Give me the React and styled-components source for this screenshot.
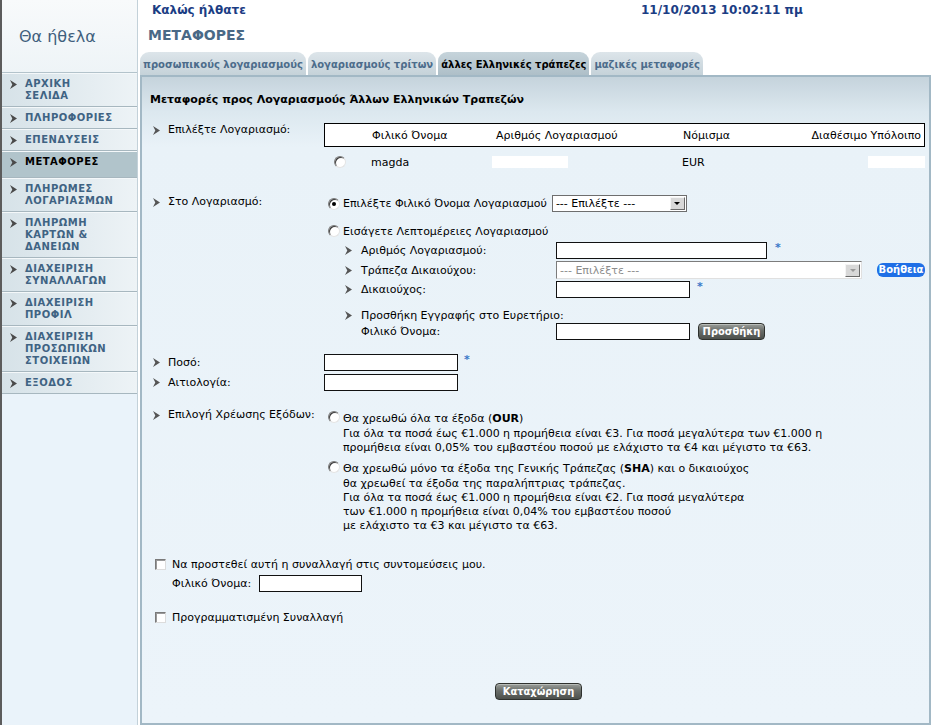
import React from "react";
import styled, { createGlobalStyle } from "styled-components";

const GlobalStyle = createGlobalStyle`
  html, body { margin: 0; padding: 0; }
  body {
    font-family: "DejaVu Sans", Verdana, sans-serif;
    font-size: 11px;
    color: #000;
    background: #fff;
  }
`;

const Page = styled.div`
  display: flex;
  width: 931px;
  height: 725px;
  overflow: hidden;
`;

/* ---------- sidebar ---------- */

const Sidebar = styled.aside`
  width: 135px;
  flex: none;
  border-left: 2px solid #5c5c5c;
  border-right: 1px solid #c3d1d9;
  background: #eaf3fa;
  display: flex;
  flex-direction: column;
`;

const Brand = styled.div`
  height: 72px;
  display: flex;
  align-items: center;
  padding-left: 17px;
  background: linear-gradient(#f8fafb, #eef4f7);
  font-size: 16px;
  color: #3f5f7d;
`;

const Menu = styled.nav`
  border-top: 1px solid #b3c3cb;
`;

const MenuItem = styled.div`
  display: flex;
  align-items: flex-start;
  gap: 8px;
  padding: 5px 6px ${(p) => (p.$active ? "9px" : "4px")} 8px;
  border-bottom: 1px solid #a7b7bf;
  box-shadow: inset 0 1px 0 #f4f8fa;
  background: ${(p) =>
    p.$active ? "#b1c4cb" : "linear-gradient(90deg, #d6e2e8, #edf3f6)"};
  color: ${(p) => (p.$active ? "#000" : "#3f6383")};
  font-weight: bold;
  font-size: 10px;
  line-height: 12px;
  letter-spacing: 0.5px;

  svg {
    margin-top: 2px;
    flex: none;
  }
`;

/* ---------- main ---------- */

const Main = styled.main`
  flex: 1;
  min-width: 0;
  display: flex;
  flex-direction: column;
  padding-left: 2px;
`;

const TopBar = styled.div`
  display: grid;
  grid-template-columns: 501px 1fr;
  height: 20px;
  align-items: center;
  font-weight: bold;
  font-size: 12px;
  color: #1b3d84;
`;

const Welcome = styled.span`
  padding-left: 12px;
`;

const PageTitle = styled.h1`
  margin: 0;
  padding: 7px 0 8px 8px;
  font-size: 14px;
  line-height: 17px;
  color: #4a6986;
`;

const Tabs = styled.div`
  display: flex;
  align-items: flex-end;
  gap: 2px;
  height: 23px;
`;

const Tab = styled.div`
  height: 23px;
  box-sizing: border-box;
  padding: 6px 3px 0;
  border-radius: 9px 9px 0 0;
  background: ${(p) =>
    p.$active
      ? "linear-gradient(#c6d4db, #aebfc8)"
      : "linear-gradient(#dde5ea, #c5d2d9)"};
  color: ${(p) => (p.$active ? "#000" : "#4c6c8b")};
  font-weight: bold;
  font-size: 10px;
  line-height: 14px;
  white-space: nowrap;
`;

const Panel = styled.section`
  flex: 1;
  border: 2px solid #a2b8c5;
  background: linear-gradient(#c5d3dc 0, #dce8ef 35px, #e9f2f8 70px, #ecf4fa 100%);
  display: flex;
  flex-direction: column;
`;

const Heading = styled.h2`
  margin: 0;
  padding: 16px 0 0 8px;
  font-size: 11px;
  line-height: 14px;
`;

const FormRow = styled.div`
  display: grid;
  grid-template-columns: 171px 1fr;
  align-items: ${(p) => p.$align || "start"};
  padding-left: 11px;
  margin-top: ${(p) => p.$mt || 0}px;
`;

const Label = styled.div`
  display: flex;
  align-items: center;
  gap: 8px;
  line-height: 14px;
  white-space: nowrap;

  svg {
    flex: none;
  }
`;

const Arrow = () => (
  <svg width="7" height="9" viewBox="0 0 7 9">
    <polygon points="0,0 7,4.5 0,9 2.3,4.5" fill="#555" />
  </svg>
);

const ValueCol = styled.div`
  display: flex;
  flex-direction: column;
`;

/* account table */

const AccountGrid = styled.div`
  display: grid;
  grid-template-columns: 47px 124px 187px 1fr auto;
  align-items: center;
  width: 601px;
  box-sizing: border-box;
`;

const AccountHead = styled(AccountGrid)`
  height: 24px;
  border: 1px solid #000;
  background: #fff;
  padding-right: 3px;
`;

const AccountRow = styled(AccountGrid)`
  height: 18px;
  margin-top: 6px;
`;

const RadioCell = styled.div`
  padding-left: 10px;
  display: flex;
`;

const Blank = styled.div`
  width: ${(p) => p.$w}px;
  height: 12px;
  background: #fff;
  margin-left: ${(p) => p.$ml || 0}px;
`;

/* radio / checkbox */

const Radio = styled.span`
  position: relative;
  flex: none;
  width: 12px;
  height: 12px;
  box-sizing: border-box;
  border-radius: 50%;
  border: 1px solid;
  border-color: #7a7a7a #e4e4e4 #e4e4e4 #7a7a7a;
  background: #fff;
  box-shadow: inset 1px 1px 0 #3c3c3c;

  &::after {
    content: "";
    display: ${(p) => (p.$checked ? "block" : "none")};
    position: absolute;
    left: 3px;
    top: 3px;
    width: 4px;
    height: 4px;
    border-radius: 50%;
    background: #000;
  }
`;

const Checkbox = styled.span`
  flex: none;
  width: 11px;
  height: 11px;
  box-sizing: border-box;
  border: 1px solid;
  border-color: #7a7a7a #dcdcdc #dcdcdc #7a7a7a;
  background: #fff;
  box-shadow: inset 1px 1px 0 #9a9a9a;
`;

const RadioLine = styled.div`
  display: flex;
  align-items: center;
  gap: 3px;
  padding-left: 4px;
  min-height: ${(p) => p.$h || 16}px;
  margin-top: ${(p) => p.$mt || 0}px;
  white-space: nowrap;
`;

/* fields */

const TextInput = styled.input`
  width: ${(p) => p.$w}px;
  height: 17px;
  box-sizing: border-box;
  margin: 0;
  padding: 0 2px;
  border: 1px solid #111;
  background: #fff;
  font: inherit;
`;

const Select = styled.div`
  display: flex;
  align-items: center;
  width: ${(p) => p.$w}px;
  height: ${(p) => (p.$disabled ? 18 : 17)}px;
  box-sizing: border-box;
  border: 1px solid;
  border-color: ${(p) =>
    p.$disabled ? "#7c7c7c #e0e0e0 #e0e0e0 #7c7c7c" : "#6e6e6e"};
  background: #fff;
  color: ${(p) => (p.$disabled ? "#8c8c8c" : "#000")};
  padding-left: 3px;
  margin-left: ${(p) => p.$ml || 0}px;
`;

const SelectText = styled.span`
  flex: 1;
  white-space: nowrap;
`;

const SelectButton = styled.span`
  width: 15px;
  height: 13px;
  margin-right: 1px;
  box-sizing: border-box;
  border: 1px solid;
  border-color: #f4f4f4 #6a6a6a #6a6a6a #f4f4f4;
  background: #d8d8d8;
  display: flex;
  align-items: center;
  justify-content: center;

  &::before {
    content: "";
    border-left: 3px solid transparent;
    border-right: 3px solid transparent;
    border-top: 3px solid ${(p) => (p.$disabled ? "#9a9a9a" : "#000")};
  }
`;

const Star = styled.span`
  color: #3a78c8;
  font-weight: bold;
  font-size: 11px;
  margin-left: ${(p) => p.$ml || 8}px;
  align-self: flex-start;
  line-height: 12px;
`;

const SubFields = styled.div`
  display: flex;
  flex-direction: column;
  gap: 2px;
  margin-top: 3px;
`;

const SubRow = styled.div`
  display: grid;
  grid-template-columns: 211px 1fr;
  align-items: center;
  padding-left: 21px;
  margin-top: ${(p) => p.$mt || 0}px;
  min-height: 14px;
`;

const SubLabel = styled.div`
  display: flex;
  align-items: center;
  gap: 9px;
  padding-left: ${(p) => (p.$plain ? 16 : 0)}px;
  white-space: nowrap;
  grid-column: ${(p) => (p.$wide ? "1 / -1" : "auto")};

  svg {
    flex: none;
  }
`;

const Field = styled.div`
  display: flex;
  align-items: center;
`;

const DarkButton = styled.button`
  width: ${(p) => p.$w}px;
  height: 17px;
  padding: 0;
  margin-left: ${(p) => p.$ml || 0}px;
  border: 1px solid #2e312e;
  border-radius: 4px;
  background: linear-gradient(#9a9e9a, #6a6e6a 45%, #4c504c);
  box-shadow: inset 0 1px 0 #b8bcb8;
  color: #fff;
  font-family: "DejaVu Sans Condensed", "DejaVu Sans", sans-serif;
  font-weight: bold;
  font-size: 11px;
  line-height: 15px;
`;

const HelpButton = styled.button`
  width: 48px;
  height: 14px;
  padding: 0;
  margin-left: 15px;
  border: none;
  border-radius: 6px;
  background: #1f6fe6;
  color: #fff;
  font-family: "DejaVu Sans", sans-serif;
  font-weight: bold;
  font-size: 10px;
  line-height: 14px;
`;

/* charges */

const Options = styled.div`
  display: flex;
  flex-direction: column;
  gap: 5px;
  margin-top: 2px;
`;

const Option = styled.div`
  display: flex;
  gap: 3px;
  padding-left: 4px;
  line-height: 14px;
  white-space: nowrap;

  ${Radio} {
    margin-top: 1px;
  }
`;

const OptionText = styled.div`
  padding-top: 1px;

  div:first-child {
    line-height: 16px;
  }
`;

/* bottom */

const CheckLine = styled.label`
  display: flex;
  align-items: center;
  gap: 6px;
  padding-left: 13px;
  height: 14px;
  margin-top: ${(p) => p.$mt || 0}px;
  white-space: nowrap;
`;

const NameLine = styled.div`
  display: flex;
  align-items: center;
  gap: 8px;
  padding-left: 30px;
  margin-top: 4px;
`;

const Submit = styled.div`
  display: flex;
  justify-content: center;
  padding-left: 6px;
  margin-top: 59px;
`;

const menu = [
  ["ΑΡΧΙΚΗ", "ΣΕΛΙΔΑ"],
  ["ΠΛΗΡΟΦΟΡΙΕΣ"],
  ["ΕΠΕΝΔΥΣΕΙΣ"],
  ["ΜΕΤΑΦΟΡΕΣ"],
  ["ΠΛΗΡΩΜΕΣ", "ΛΟΓΑΡΙΑΣΜΩΝ"],
  ["ΠΛΗΡΩΜΗ", "ΚΑΡΤΩΝ &", "ΔΑΝΕΙΩΝ"],
  ["ΔΙΑΧΕΙΡΙΣΗ", "ΣΥΝΑΛΛΑΓΩΝ"],
  ["ΔΙΑΧΕΙΡΙΣΗ", "ΠΡΟΦΙΛ"],
  ["ΔΙΑΧΕΙΡΙΣΗ", "ΠΡΟΣΩΠΙΚΩΝ", "ΣΤΟΙΧΕΙΩΝ"],
  ["ΕΞΟΔΟΣ"],
];

const tabs = [
  "προσωπικούς λογαριασμούς",
  "λογαριασμούς τρίτων",
  "άλλες Ελληνικές τράπεζες",
  "μαζικές μεταφορές",
];

export default function App() {
  return (
    <Page>
      <GlobalStyle />
      <Sidebar>
        <Brand>Θα ήθελα</Brand>
        <Menu>
          {menu.map((lines, i) => (
            <MenuItem key={i} $active={i === 3}>
              <svg width="7" height="9" viewBox="0 0 7 9">
                <polygon points="0,0 7,4.5 0,9 2.3,4.5" fill="#4a4a4a" />
              </svg>
              <div>
                {lines.map((l) => (
                  <div key={l}>{l}</div>
                ))}
              </div>
            </MenuItem>
          ))}
        </Menu>
      </Sidebar>

      <Main>
        <TopBar>
          <Welcome>Καλώς ήλθατε</Welcome>
          <span>11/10/2013 10:02:11 πμ</span>
        </TopBar>
        <PageTitle>ΜΕΤΑΦΟΡΕΣ</PageTitle>
        <Tabs>
          {tabs.map((t, i) => (
            <Tab key={t} $active={i === 2}>
              {t}
            </Tab>
          ))}
        </Tabs>

        <Panel>
          <Heading>Μεταφορές προς Λογαριασμούς Άλλων Ελληνικών Τραπεζών</Heading>

          <FormRow $mt={16}>
            <Label>
              <Arrow />
              Επιλέξτε Λογαριασμό:
            </Label>
            <ValueCol>
              <AccountHead>
                <span />
                <span>Φιλικό Όνομα</span>
                <span>Αριθμός Λογαριασμού</span>
                <span>Νόμισμα</span>
                <span>Διαθέσιμο Υπόλοιπο</span>
              </AccountHead>
              <AccountRow>
                <RadioCell>
                  <Radio />
                </RadioCell>
                <span>magda</span>
                <Blank $w={76} $ml={-3} />
                <span>EUR</span>
                <Blank $w={57} />
              </AccountRow>
            </ValueCol>
          </FormRow>

          <FormRow $mt={24}>
            <Label>
              <Arrow />
              Στο Λογαριασμό:
            </Label>
            <ValueCol>
              <RadioLine $h={17}>
                <Radio $checked />
                <span>Επιλέξτε Φιλικό Όνομα Λογαριασμού</span>
                <Select $w={135} $ml={2}>
                  <SelectText>--- Επιλέξτε ---</SelectText>
                  <SelectButton />
                </Select>
              </RadioLine>
              <RadioLine $mt={11}>
                <Radio />
                <span>Εισάγετε Λεπτομέρειες Λογαριασμού</span>
              </RadioLine>
              <SubFields>
                <SubRow>
                  <SubLabel>
                    <Arrow />
                    Αριθμός Λογαριασμού:
                  </SubLabel>
                  <Field>
                    <TextInput $w={211} readOnly />
                    <Star>*</Star>
                  </Field>
                </SubRow>
                <SubRow>
                  <SubLabel>
                    <Arrow />
                    Τράπεζα Δικαιούχου:
                  </SubLabel>
                  <Field>
                    <Select $w={306} $disabled>
                      <SelectText>--- Επιλέξτε ---</SelectText>
                      <SelectButton $disabled />
                    </Select>
                    <HelpButton>Βοήθεια</HelpButton>
                  </Field>
                </SubRow>
                <SubRow>
                  <SubLabel>
                    <Arrow />
                    Δικαιούχος:
                  </SubLabel>
                  <Field>
                    <TextInput $w={134} readOnly />
                    <Star $ml={7}>*</Star>
                  </Field>
                </SubRow>
                <SubRow $mt={8}>
                  <SubLabel $wide>
                    <Arrow />
                    Προσθήκη Εγγραφής στο Ευρετήριο:
                  </SubLabel>
                </SubRow>
                <SubRow $mt={-1}>
                  <SubLabel $plain>Φιλικό Όνομα:</SubLabel>
                  <Field>
                    <TextInput $w={134} readOnly />
                    <DarkButton $w={67} $ml={8}>
                      Προσθήκη
                    </DarkButton>
                  </Field>
                </SubRow>
              </SubFields>
            </ValueCol>
          </FormRow>

          <FormRow $mt={14} $align="center">
            <Label>
              <Arrow />
              Ποσό:
            </Label>
            <Field>
              <TextInput $w={134} readOnly />
              <Star $ml={6}>*</Star>
            </Field>
          </FormRow>
          <FormRow $mt={3} $align="center">
            <Label>
              <Arrow />
              Αιτιολογία:
            </Label>
            <Field>
              <TextInput $w={134} readOnly />
            </Field>
          </FormRow>

          <FormRow $mt={17}>
            <Label>
              <Arrow />
              Επιλογή Χρέωσης Εξόδων:
            </Label>
            <Options>
              <Option>
                <Radio />
                <OptionText>
                  <div>
                    Θα χρεωθώ όλα τα έξοδα (<b>OUR</b>)
                  </div>
                  <div>
                    Για όλα τα ποσά έως €1.000 η προμήθεια είναι €3. Για ποσά
                    μεγαλύτερα των €1.000 η
                  </div>
                  <div>
                    προμήθεια είναι 0,05% του εμβαστέου ποσού με ελάχιστο τα €4
                    και μέγιστο τα €63.
                  </div>
                </OptionText>
              </Option>
              <Option>
                <Radio />
                <OptionText>
                  <div>
                    Θα χρεωθώ μόνο τα έξοδα της Γενικής Τράπεζας (<b>SHA</b>) και
                    ο δικαιούχος
                  </div>
                  <div>θα χρεωθεί τα έξοδα της παραλήπτριας τράπεζας.</div>
                  <div>
                    Για όλα τα ποσά έως €1.000 η προμήθεια είναι €2. Για ποσά
                    μεγαλύτερα
                  </div>
                  <div>των €1.000 η προμήθεια είναι 0,04% του εμβαστέου ποσού</div>
                  <div>με ελάχιστο τα €3 και μέγιστο τα €63.</div>
                </OptionText>
              </Option>
            </Options>
          </FormRow>

          <CheckLine $mt={24}>
            <Checkbox />
            Να προστεθεί αυτή η συναλλαγή στις συντομεύσεις μου.
          </CheckLine>
          <NameLine>
            <span>Φιλικό Όνομα:</span>
            <TextInput $w={103} readOnly />
          </NameLine>
          <CheckLine $mt={18}>
            <Checkbox />
            Προγραμματισμένη Συναλλαγή
          </CheckLine>

          <Submit>
            <DarkButton $w={87}>Καταχώρηση</DarkButton>
          </Submit>
        </Panel>
      </Main>
    </Page>
  );
}
